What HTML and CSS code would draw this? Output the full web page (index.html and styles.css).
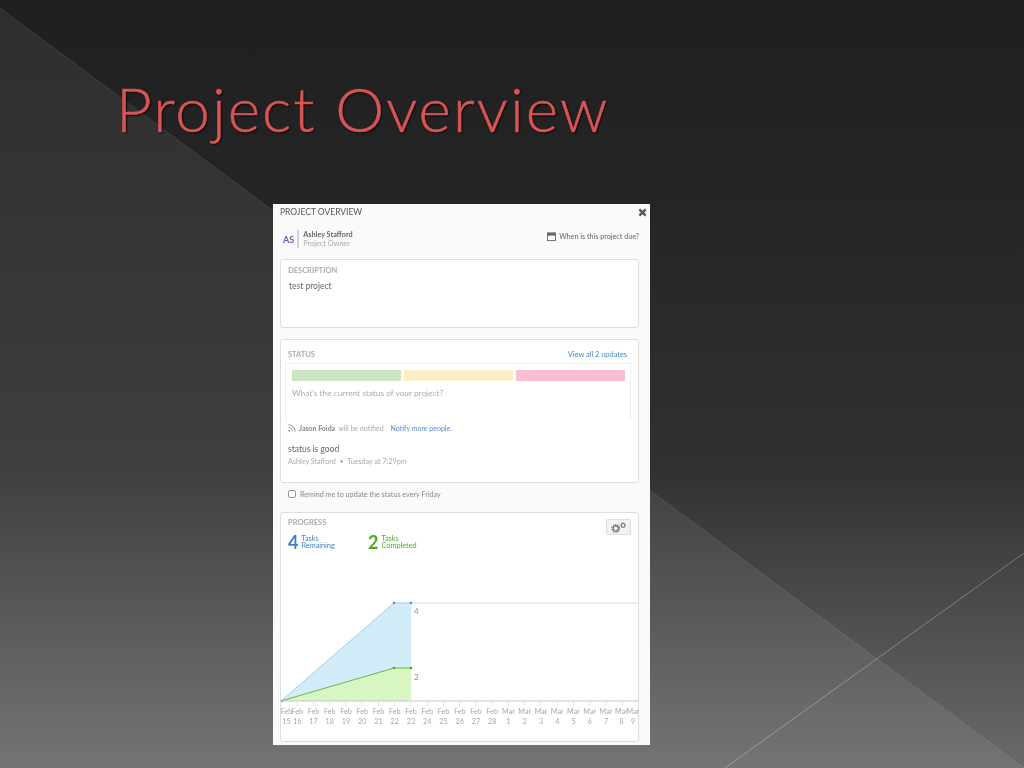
FILE: index.html
```html
<!DOCTYPE html>
<html lang="en">
  <head>
    <meta charset="UTF-8" />
    <title>Project Overview</title>
    <link rel="stylesheet" href="styles.css">
  </head>
  <body>
    <div class="slide">
      <svg class="backdrop" viewBox="0 0 1024 768" width="1024" height="768">
        <polygon class="shade" points="0,8 1024,768 0,768"></polygon>
        <line class="edge" x1="0" y1="8" x2="1024" y2="768"></line>
        <line class="edge_light" x1="1024" y1="553" x2="725" y2="768"></line>
      </svg>

      <h1 class="title">Project Overview</h1>

      <div class="panel">
        <div class="panel_head">
          <span class="panel_title">PROJECT OVERVIEW</span>
          <svg class="close" viewBox="0 0 10 10" width="9" height="9">
            <path d="M1.5 1.5L8.5 8.5M8.5 1.5L1.5 8.5"></path>
          </svg>
        </div>

        <div class="owner_row">
          <div class="owner">
            <span class="initials">AS</span>
            <div class="owner_name">
              <b>Ashley Stafford</b>
              <span>Project Owner</span>
            </div>
          </div>
          <div class="due">
            <svg viewBox="0 0 10 10" width="9" height="9">
              <rect x="0.5" y="1" width="9" height="8.5" fill="none" stroke="#666" stroke-width="1"></rect>
              <rect x="0.5" y="1" width="9" height="3" fill="#666"></rect>
            </svg>
            When is this project due?
          </div>
        </div>

        <div class="card card_desc">
          <div class="label">DESCRIPTION</div>
          <div class="desc_text">test project</div>
        </div>

        <div class="card card_status">
          <div class="status_head">
            <div class="label">STATUS</div>
            <span class="view_all">View all 2 updates</span>
          </div>
          <div class="composer">
            <div class="bars">
              <div class="bar bar_green"></div>
              <div class="bar bar_yellow"></div>
              <div class="bar bar_red"></div>
            </div>
            <div class="placeholder">What's the current status of your project?</div>
          </div>
          <div class="notify">
            <svg viewBox="0 0 10 10" width="8" height="8">
              <circle cx="1.6" cy="8.4" r="1.3" fill="#999"></circle>
              <path d="M0.5 4.5a5 5 0 0 1 5 5M0.5 1a8.5 8.5 0 0 1 8.5 8.5" fill="none" stroke="#999" stroke-width="1.3"></path>
            </svg>
            <b>Jason Foida</b> will be notified
            <span class="notify_link">Notify more people.</span>
          </div>
          <div class="update_text">status is good</div>
          <div class="update_meta">Ashley Stafford &nbsp;•&nbsp; Tuesday at 7:29pm</div>
        </div>

        <label class="remind">
          <span class="check"></span>
          Remind me to update the status every Friday
        </label>

        <div class="card card_progress">
          <div class="progress_head">
            <div class="label">PROGRESS</div>
            <div class="gear_btn">
              <svg viewBox="0 0 18 12" width="17" height="11">
                <circle cx="6" cy="7" r="2.8" fill="none" stroke="#666" stroke-width="1.2"></circle>
                <circle cx="6" cy="7" r="4.2" fill="none" stroke="#666" stroke-width="1.4" stroke-dasharray="1.3 1.35"></circle>
                <circle cx="14" cy="3.5" r="2.2" fill="none" stroke="#666" stroke-width="1.1"></circle>
              </svg>
            </div>
          </div>
          <div class="counts">
            <div class="count count_blue">
              <span class="num">4</span>
              <span class="count_text">Tasks<br>Remaining</span>
            </div>
            <div class="count count_green">
              <span class="num">2</span>
              <span class="count_text">Tasks<br>Completed</span>
            </div>
          </div>

          <svg class="chart" viewBox="0 0 358 188" width="358" height="188">
            <line class="blue_rest" x1="130" y1="50" x2="358" y2="50"></line>
            <polygon class="blue_area" points="0,148 113,50 130,50 130,148"></polygon>
            <polygon class="green_area" points="0,148 113,115 130,115 130,148"></polygon>
            <polyline class="blue_line" points="0,148 113,50 130,50"></polyline>
            <polyline class="green_line" points="0,148 113,115 130,115"></polyline>
            <circle class="blue_dot" cx="113" cy="50" r="1.3"></circle>
            <circle class="blue_dot" cx="130" cy="50" r="1.3"></circle>
            <circle class="green_dot" cx="0.5" cy="148" r="1.3"></circle>
            <circle class="green_dot" cx="113" cy="115" r="1.3"></circle>
            <circle class="green_dot" cx="130" cy="115" r="1.3"></circle>
            <text class="val_blue" x="133" y="61">4</text>
            <text class="val_green" x="133" y="127">2</text>

            <line class="axis" x1="0" y1="148" x2="358" y2="148"></line>
            <path class="ticks" d="M16.25 148v5M32.5 148v5M48.75 148v5M65 148v5M81.25 148v5M97.5 148v5M113.75 148v5M130 148v5M146.25 148v5M162.5 148v5M178.75 148v5M195 148v5M211.25 148v5M227.5 148v5M243.75 148v5M260 148v5M276.25 148v5M292.5 148v5M308.75 148v5M325 148v5M341.25 148v5"></path>

            <g class="dates">
              <text y="161"><tspan x="5.5">Feb</tspan><tspan x="5.5" dy="10">15</tspan></text>
              <text y="161"><tspan x="16.25">Feb</tspan><tspan x="16.25" dy="10">16</tspan></text>
              <text y="161"><tspan x="32.5">Feb</tspan><tspan x="32.5" dy="10">17</tspan></text>
              <text y="161"><tspan x="48.75">Feb</tspan><tspan x="48.75" dy="10">18</tspan></text>
              <text y="161"><tspan x="65">Feb</tspan><tspan x="65" dy="10">19</tspan></text>
              <text y="161"><tspan x="81.25">Feb</tspan><tspan x="81.25" dy="10">20</tspan></text>
              <text y="161"><tspan x="97.5">Feb</tspan><tspan x="97.5" dy="10">21</tspan></text>
              <text y="161"><tspan x="113.75">Feb</tspan><tspan x="113.75" dy="10">22</tspan></text>
              <text y="161"><tspan x="130">Feb</tspan><tspan x="130" dy="10">23</tspan></text>
              <text y="161"><tspan x="146.25">Feb</tspan><tspan x="146.25" dy="10">24</tspan></text>
              <text y="161"><tspan x="162.5">Feb</tspan><tspan x="162.5" dy="10">25</tspan></text>
              <text y="161"><tspan x="178.75">Feb</tspan><tspan x="178.75" dy="10">26</tspan></text>
              <text y="161"><tspan x="195">Feb</tspan><tspan x="195" dy="10">27</tspan></text>
              <text y="161"><tspan x="211.25">Feb</tspan><tspan x="211.25" dy="10">28</tspan></text>
              <text y="161"><tspan x="227.5">Mar</tspan><tspan x="227.5" dy="10">1</tspan></text>
              <text y="161"><tspan x="243.75">Mar</tspan><tspan x="243.75" dy="10">2</tspan></text>
              <text y="161"><tspan x="260">Mar</tspan><tspan x="260" dy="10">3</tspan></text>
              <text y="161"><tspan x="276.25">Mar</tspan><tspan x="276.25" dy="10">4</tspan></text>
              <text y="161"><tspan x="292.5">Mar</tspan><tspan x="292.5" dy="10">5</tspan></text>
              <text y="161"><tspan x="308.75">Mar</tspan><tspan x="308.75" dy="10">6</tspan></text>
              <text y="161"><tspan x="325">Mar</tspan><tspan x="325" dy="10">7</tspan></text>
              <text y="161"><tspan x="340.5">Mar</tspan><tspan x="340.5" dy="10">8</tspan></text>
              <text y="161"><tspan x="352">Mar</tspan><tspan x="352" dy="10">9</tspan></text>
            </g>
          </svg>
        </div>
      </div>
    </div>
  </body>
</html>
```

FILE: styles.css
```css
* {
  margin: 0;
  padding: 0;
  box-sizing: border-box;
}
html,
body {
  width: 1024px;
  height: 768px;
  overflow: hidden;
}
body {
  font-family: "Lato", "Liberation Sans", sans-serif;
}

.slide {
  position: relative;
  width: 1024px;
  height: 768px;
  overflow: hidden;
  background: linear-gradient(to bottom, #1f1f1f 0px, #252525 200px, #313131 470px, #4e4e4e 620px, #6a6a6a 768px);
}
.backdrop {
  position: absolute;
  left: 0;
  top: 0;
}
.shade {
  fill: rgba(255, 255, 255, 0.07);
}
.edge {
  stroke: rgba(255, 255, 255, 0.1);
  stroke-width: 1;
}
.edge_light {
  stroke: rgba(255, 255, 255, 0.3);
  stroke-width: 1;
}

.title {
  position: relative;
  height: 204px;
  padding: 68px 0 0 116px;
  font-size: 62px;
  line-height: 80px;
  font-weight: 300;
  letter-spacing: 2px;
  color: #d95454;
  -webkit-text-stroke: 0.5px #d95454;
  text-shadow: 1px 1px 2px #000;
}

.panel {
  position: relative;
  display: flex;
  flex-direction: column;
  width: 377px;
  height: 541px;
  margin-left: 273px;
  padding: 0 11px 0 7px;
  background-color: #fafafa;
  font-size: 8px;
  color: #666;
  filter: blur(0.3px);
}

.panel_head {
  display: flex;
  justify-content: space-between;
  align-items: center;
  height: 16px;
  margin-right: -8px;
}
.panel_title {
  font-size: 8.5px;
  color: #555;
}
.close path {
  stroke: #4d5a66;
  stroke-width: 2.6;
  fill: none;
}

.owner_row {
  display: flex;
  justify-content: space-between;
  align-items: flex-start;
  height: 20px;
  margin-top: 10px;
}
.owner {
  display: flex;
  align-items: center;
  padding-left: 3px;
}
.initials {
  font-size: 9px;
  font-weight: 700;
  color: #6a5cae;
  padding-right: 3px;
}
.owner_name {
  display: flex;
  flex-direction: column;
  justify-content: center;
  height: 18px;
  padding-left: 4px;
  border-left: 2px solid #d5cdf0;
  line-height: 9px;
  font-size: 7.3px;
  color: #aaa;
}
.owner_name b {
  color: #666;
}
.due {
  display: flex;
  align-items: center;
  gap: 3px;
  height: 12px;
  font-size: 7.2px;
  color: #666;
}

.card {
  flex-shrink: 0;
  width: 359px;
  background-color: #fff;
  border: 1px solid #dedede;
  border-radius: 3px;
}
.label {
  font-size: 7.5px;
  font-weight: 700;
  color: #aaa;
}

.card_desc {
  height: 69px;
  margin-top: 9px;
  padding: 6px 7px;
}
.desc_text {
  margin-top: 6px;
  padding-left: 1px;
  font-size: 8.5px;
  color: #666;
}

.card_status {
  height: 144px;
  margin-top: 11px;
  padding: 9px 11px 0 4px;
}
.status_head {
  display: flex;
  justify-content: space-between;
  padding-left: 3px;
  line-height: 11px;
}
.view_all {
  font-size: 7.4px;
  color: #4a8cc7;
}
.composer {
  width: 346px;
  height: 57px;
  margin-top: 3px;
  padding: 6px 5px 0 6px;
  border: 1px solid #efefef;
  border-bottom: none;
}
.bars {
  display: flex;
  gap: 3px;
}
.bar {
  flex: 1;
  height: 11px;
}
.bar_green {
  background-color: #cbe6c0;
}
.bar_yellow {
  background-color: #fbeec4;
}
.bar_red {
  background-color: #f9bed0;
}
.placeholder {
  margin-top: 7px;
  font-size: 8.3px;
  color: #aaa;
}
.notify {
  display: flex;
  align-items: center;
  gap: 3px;
  margin-top: 4px;
  padding-left: 3px;
  font-size: 7px;
  color: #aaa;
}
.notify b {
  color: #888;
}
.notify_link {
  margin-left: 4px;
  color: #5b86cf;
}
.update_text {
  margin-top: 12px;
  padding-left: 3px;
  font-size: 8.5px;
  color: #666;
}
.update_meta {
  margin-top: 3px;
  padding-left: 3px;
  font-size: 7.2px;
  color: #aaa;
}

.remind {
  display: flex;
  align-items: center;
  gap: 4px;
  height: 22px;
  padding-left: 8px;
  font-size: 7.2px;
  color: #888;
}
.check {
  width: 8px;
  height: 8px;
  background-color: #fff;
  border: 1px solid #999;
  border-radius: 2px;
}

.card_progress {
  position: relative;
  height: 230px;
  margin-top: 7px;
}
.progress_head {
  display: flex;
  justify-content: space-between;
  align-items: flex-start;
  height: 19px;
  padding: 5px 7px 0 7px;
}
.gear_btn {
  display: flex;
  justify-content: center;
  align-items: center;
  width: 25px;
  height: 16px;
  margin-top: 1px;
  background-color: #f2f2f2;
  border: 1px solid #ddd;
  border-radius: 2px;
}
.counts {
  display: flex;
  gap: 32px;
  height: 20px;
  padding-left: 7px;
}
.count {
  display: flex;
  align-items: center;
  gap: 3px;
  width: 48px;
}
.num {
  font-size: 18px;
  font-weight: 700;
  line-height: 18px;
}
.count_text {
  font-size: 7.3px;
  line-height: 7.5px;
}
.count_blue {
  color: #3d85c6;
}
.count_green {
  color: #4caf1e;
}

.chart {
  display: block;
  position: absolute;
  left: 0;
  top: 40px;
}
.blue_rest {
  stroke: #c8e0ee;
  stroke-width: 1;
}
.blue_area {
  fill: #d3ecf9;
}
.green_area {
  fill: #d8f6c2;
}
.blue_line {
  fill: none;
  stroke: #a5cde5;
  stroke-width: 1;
}
.green_line {
  fill: none;
  stroke: #6cb548;
  stroke-width: 1;
}
.blue_dot {
  fill: #4a90c4;
}
.green_dot {
  fill: #4ea52a;
}
.val_blue {
  font-size: 8px;
  fill: #6f9fbf;
}
.val_green {
  font-size: 8px;
  fill: #6fae4c;
}
.axis {
  stroke: #c4c4c4;
  stroke-width: 1;
}
.ticks {
  stroke: #e2e2e2;
  stroke-width: 1;
  fill: none;
}
.dates text {
  font-size: 7.2px;
  fill: #a8a8a8;
  text-anchor: middle;
}
```
